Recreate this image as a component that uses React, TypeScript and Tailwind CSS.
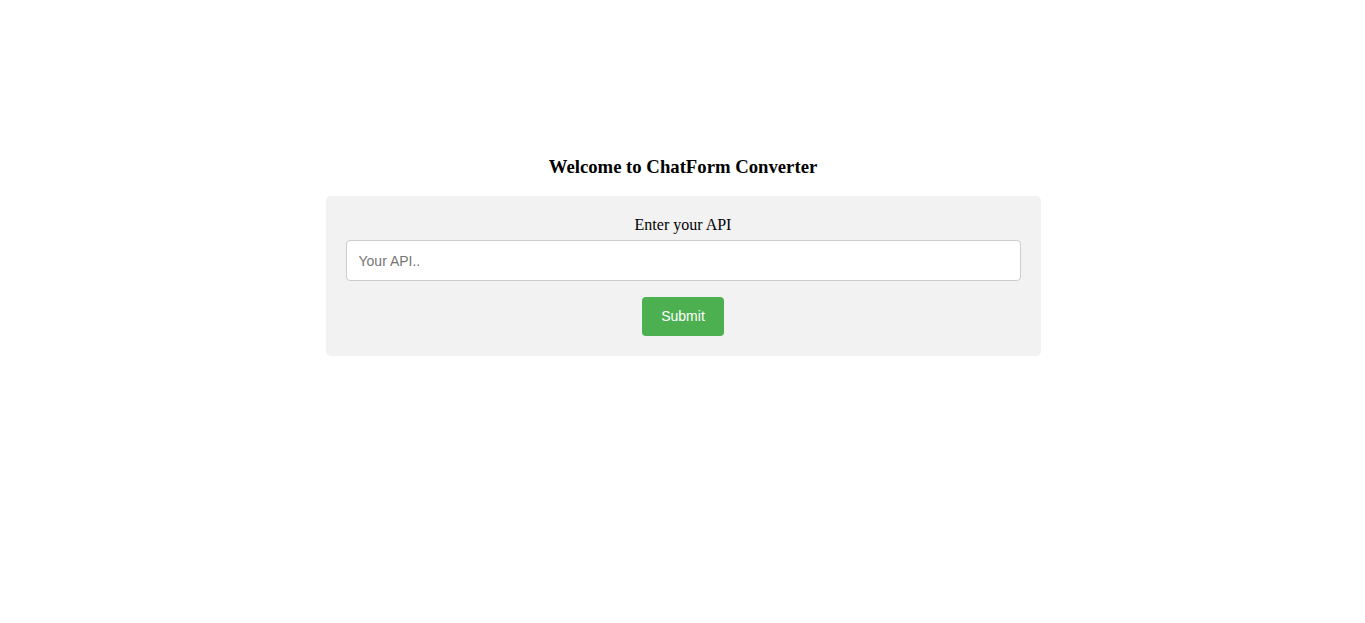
export default function App() {
  return (
    <div className="min-h-[623px] w-full bg-white pl-px pt-[156px] font-['Liberation_Serif',serif] text-black">
      <h3 className="h-[22px] text-center text-[18.72px] font-bold leading-[22px]">
        Welcome to ChatForm Converter
      </h3>

      {/* Form panel */}
      <div className="mx-auto mt-[18px] flex w-[715px] flex-col items-center rounded-[5px] bg-[#f2f2f2] p-[20px]">
        <label className="h-[18px] text-[16px] leading-[18px]">Enter your API</label>
        <input
          type="text"
          placeholder="Your API.."
          className="mt-[6px] h-[41px] w-full rounded-[4px] border border-[#ccc] bg-white px-[12px] font-['Liberation_Sans',sans-serif] text-[14px] text-black outline-none placeholder:text-[#757575]"
        />
        <button className="mt-[16px] h-[39px] w-[82px] rounded-[4px] bg-[#4caf50] font-['Liberation_Sans',sans-serif] text-[14px] font-normal text-white">
          Submit
        </button>
      </div>
    </div>
  )
}
